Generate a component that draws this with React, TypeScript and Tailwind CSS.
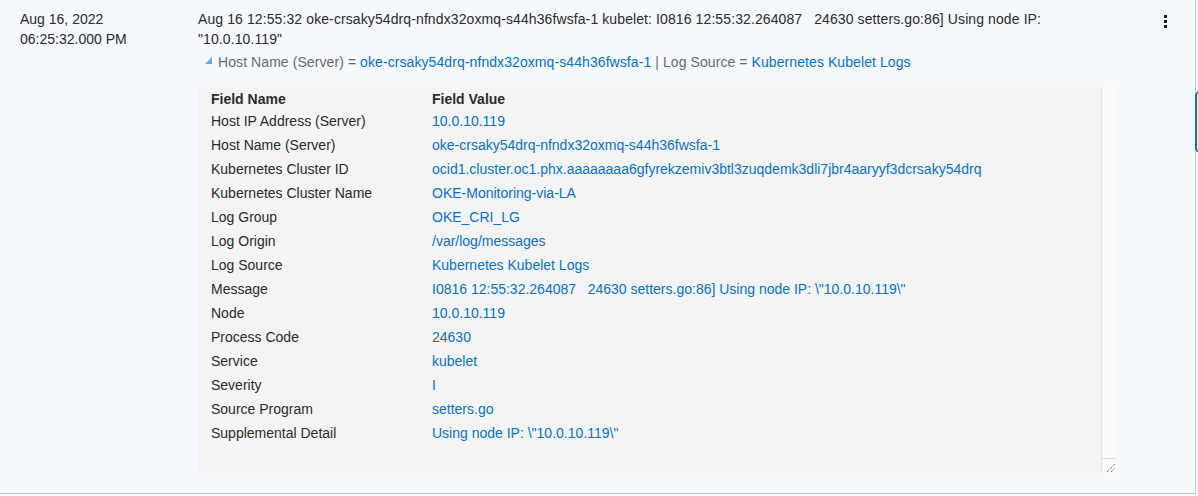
import React from "react";

const rows: [string, string][] = [
  ["Host IP Address (Server)", "10.0.10.119"],
  ["Host Name (Server)", "oke-crsaky54drq-nfndx32oxmq-s44h36fwsfa-1"],
  ["Kubernetes Cluster ID", "ocid1.cluster.oc1.phx.aaaaaaaa6gfyrekzemiv3btl3zuqdemk3dli7jbr4aaryyf3dcrsaky54drq"],
  ["Kubernetes Cluster Name", "OKE-Monitoring-via-LA"],
  ["Log Group", "OKE_CRI_LG"],
  ["Log Origin", "/var/log/messages"],
  ["Log Source", "Kubernetes Kubelet Logs"],
  ["Message", 'I0816 12:55:32.264087   24630 setters.go:86] Using node IP: \\"10.0.10.119\\"'],
  ["Node", "10.0.10.119"],
  ["Process Code", "24630"],
  ["Service", "kubelet"],
  ["Severity", "I"],
  ["Source Program", "setters.go"],
  ["Supplemental Detail", 'Using node IP: \\"10.0.10.119\\"'],
];

export default function App() {
  return (
    <div
      className="relative w-[1198px] h-[496px] overflow-hidden bg-[#f5f8fd] text-[14px] text-[#2b2b2b]"
      style={{ fontFamily: '"Liberation Sans", Arial, sans-serif' }}
    >
      <div className="w-[1196px] h-[494px] border-r border-b border-[#c4c6ca] flex pt-[9px]">
        <div className="w-[198px] pl-5 leading-5 shrink-0">
          <div>Aug 16, 2022</div>
          <div>06:25:32.000 PM</div>
        </div>
        <div className="w-[918px] shrink-0">
          <div className="w-[880px] leading-5 whitespace-pre-wrap tracking-[0.1px]">
            {'Aug 16 12:55:32 oke-crsaky54drq-nfndx32oxmq-s44h36fwsfa-1 kubelet: I0816 12:55:32.264087   24630 setters.go:86] Using node IP: "10.0.10.119"'}
          </div>
          <div className="flex items-center leading-5 mt-[3px] text-[#6b6b6b] whitespace-pre tracking-[0.08px]">
            <svg width="12" height="8" viewBox="0 0 12 8" className="ml-[3px] mr-[5px] mb-[2px]">
              <polygon points="11,0 11,7 4,7" fill="#6aa9df" />
            </svg>
            <span>{"Host Name (Server) = "}</span>
            <span className="text-[#0572ce]">oke-crsaky54drq-nfndx32oxmq-s44h36fwsfa-1</span>
            <span>{" | Log Source = "}</span>
            <span className="text-[#0572ce]">Kubernetes Kubelet Logs</span>
          </div>
          <div className="mt-[15px] h-[386px] bg-[#f4f4f4] flex">
            <div className="flex-1 pl-[13px] pt-[2px]">
              <div className="flex h-5 items-center font-bold text-[#2b2b2b]">
                <div className="w-[221px]">Field Name</div>
                <div>Field Value</div>
              </div>
              {rows.map(([k, v]) => (
                <div key={k} className="flex h-6 items-center">
                  <div className="w-[221px] shrink-0">{k}</div>
                  <div className="text-[#0572ce] whitespace-pre">{v}</div>
                </div>
              ))}
            </div>
            <div className="w-[15px] border-l border-[#e3e3e3] bg-[#fafafa] flex flex-col justify-end">
              <div className="h-[15px] border-t border-[#dcdcdc] relative">
                <svg width="14" height="14" viewBox="0 0 14 14" className="absolute left-0 top-0">
                  <line x1="5" y1="13" x2="13" y2="5" stroke="#555" strokeWidth="1" strokeDasharray="1 1" />
                  <line x1="9" y1="13" x2="13" y2="9" stroke="#555" strokeWidth="1" strokeDasharray="1 1" />
                </svg>
              </div>
            </div>
          </div>
        </div>
        <div className="flex-1 flex justify-end pr-[28px] pt-[6px]">
          <div className="flex flex-col gap-[2px] items-center">
            <div className="w-[3px] h-[3px] bg-[#1a1a1a]" />
            <div className="w-[3px] h-[3px] bg-[#1a1a1a]" />
            <div className="w-[3px] h-[3px] bg-[#1a1a1a]" />
          </div>
        </div>
      </div>
      <div className="absolute left-[1195px] top-[91px] w-[12px] h-[62px] rounded-[5px] border-2 border-[#0572ce] bg-white" />
    </div>
  );
}
